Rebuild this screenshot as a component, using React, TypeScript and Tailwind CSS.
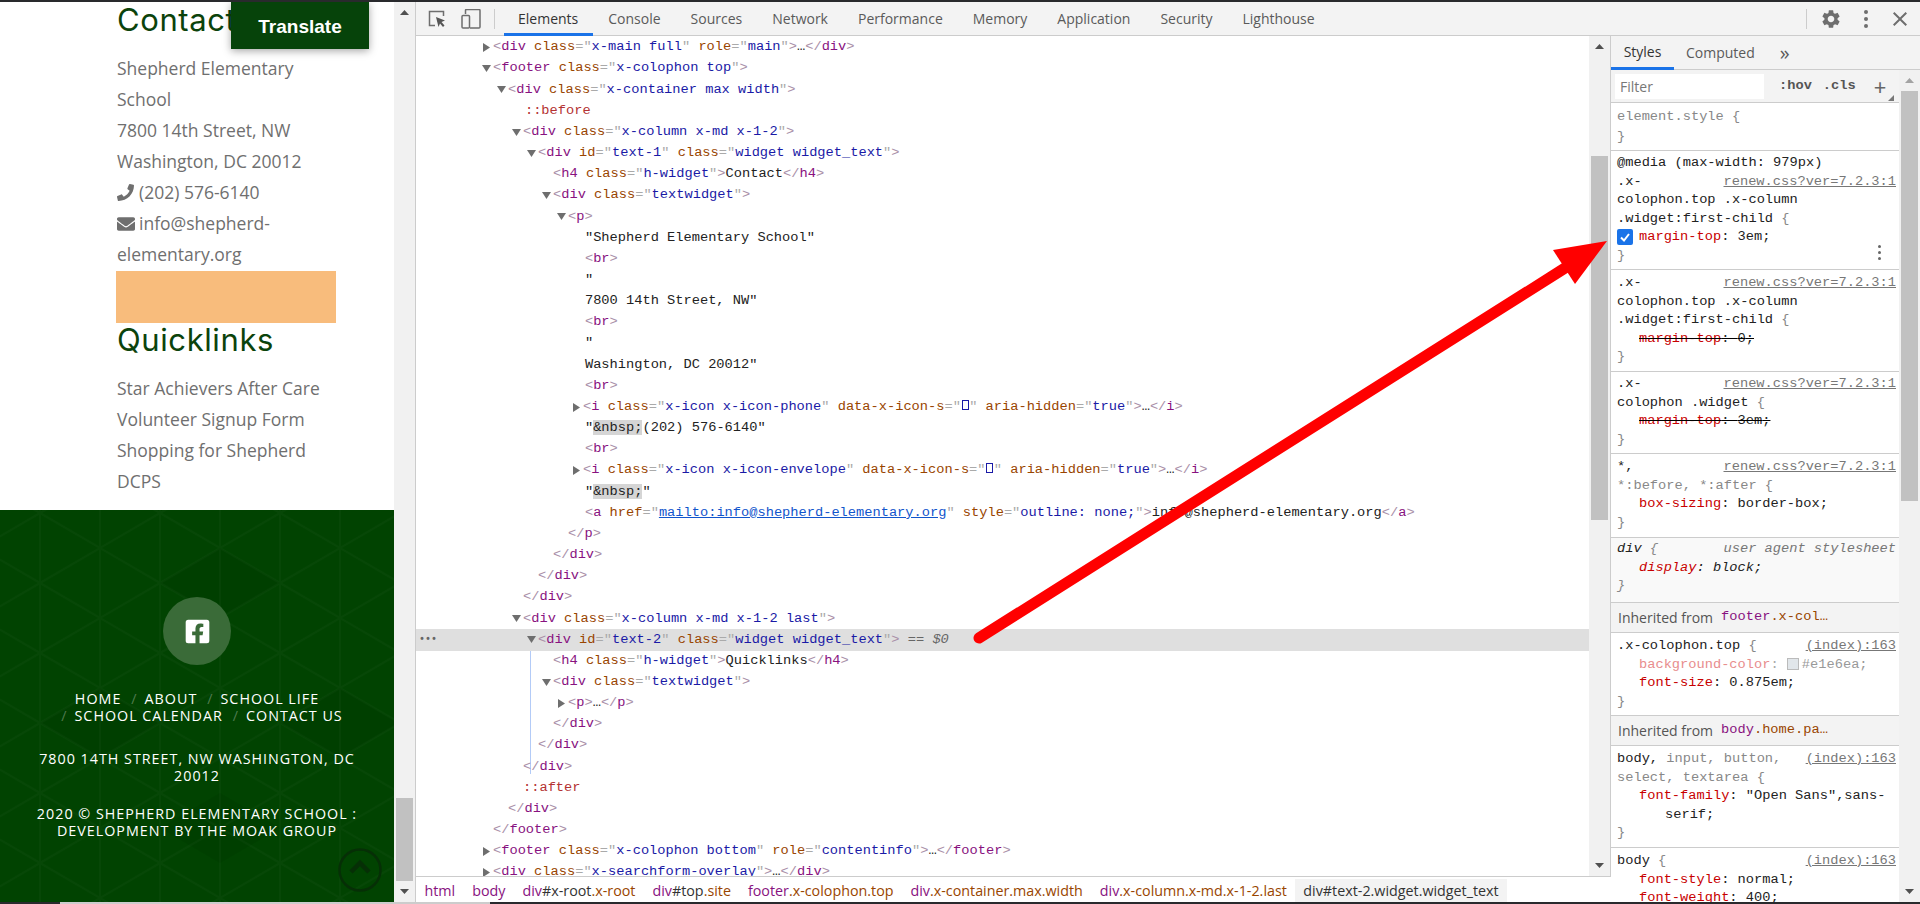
import { Fragment, type ReactNode } from 'react';
import { FaFacebookSquare, FaPhone, FaEnvelope } from 'react-icons/fa';
import { MdSettings, MdClose } from 'react-icons/md';

const ui = "font-['Open_Sans',sans-serif]";
const mono = "font-['Liberation_Mono',monospace]";

function Bracket({ children }: { children: ReactNode }) {
  return <span className="text-[#a98fa8]">{children}</span>;
}

function Attrs({ list }: { list: [string, ReactNode][] }) {
  return (
    <>
      {list.map(([k, v]) => (
        <Fragment key={k}>
          {' '}
          <span className="text-[#994500]">{k}</span>
          <span className="text-[#aaaaaa]">="</span>
          <span className="text-[#1a1aa6]">{v}</span>
          <span className="text-[#aaaaaa]">"</span>
        </Fragment>
      ))}
    </>
  );
}

function Open({ t, a = [] }: { t: string; a?: [string, ReactNode][] }) {
  return (
    <>
      <Bracket>&lt;</Bracket>
      <span className="text-[#881280]">{t}</span>
      <Attrs list={a} />
      <Bracket>&gt;</Bracket>
    </>
  );
}

function Close({ t }: { t: string }) {
  return (
    <>
      <Bracket>&lt;/</Bracket>
      <span className="text-[#881280]">{t}</span>
      <Bracket>&gt;</Bracket>
    </>
  );
}

function Tofu() {
  return (
    <span className="inline-flex w-[8.22px] justify-center">
      <span className="inline-block h-[10px] w-[7px] border border-[#1a1aa6]" />
    </span>
  );
}

function Nbsp() {
  return <span className="bg-[#d5d5d5]">&amp;nbsp;</span>;
}

type Row = { lv: number; arrow?: 'down' | 'right'; body: ReactNode; selected?: boolean };

const rows: Row[] = [
  { lv: 0, arrow: 'right', body: <><Open t="div" a={[['class', 'x-main full'], ['role', 'main']]} />…<Close t="div" /></> },
  { lv: 0, arrow: 'down', body: <Open t="footer" a={[['class', 'x-colophon top']]} /> },
  { lv: 1, arrow: 'down', body: <Open t="div" a={[['class', 'x-container max width']]} /> },
  { lv: 2.13, body: <span className="text-[#b43232]">::before</span> },
  { lv: 2, arrow: 'down', body: <Open t="div" a={[['class', 'x-column x-md x-1-2']]} /> },
  { lv: 3, arrow: 'down', body: <Open t="div" a={[['id', 'text-1'], ['class', 'widget widget_text']]} /> },
  { lv: 4, body: <><Open t="h4" a={[['class', 'h-widget']]} />Contact<Close t="h4" /></> },
  { lv: 4, arrow: 'down', body: <Open t="div" a={[['class', 'textwidget']]} /> },
  { lv: 5, arrow: 'down', body: <Open t="p" /> },
  { lv: 6.13, body: '"Shepherd Elementary School"' },
  { lv: 6.13, body: <Open t="br" /> },
  { lv: 6.13, body: '"' },
  { lv: 6.13, body: '7800 14th Street, NW"' },
  { lv: 6.13, body: <Open t="br" /> },
  { lv: 6.13, body: '"' },
  { lv: 6.13, body: 'Washington, DC 20012"' },
  { lv: 6.13, body: <Open t="br" /> },
  { lv: 6, arrow: 'right', body: <><Open t="i" a={[['class', 'x-icon x-icon-phone'], ['data-x-icon-s', <Tofu />], ['aria-hidden', 'true']]} />…<Close t="i" /></> },
  { lv: 6.13, body: <>"<Nbsp />(202) 576-6140"</> },
  { lv: 6.13, body: <Open t="br" /> },
  { lv: 6, arrow: 'right', body: <><Open t="i" a={[['class', 'x-icon x-icon-envelope'], ['data-x-icon-s', <Tofu />], ['aria-hidden', 'true']]} />…<Close t="i" /></> },
  { lv: 6.13, body: <>"<Nbsp />"</> },
  { lv: 6.13, body: <><Open t="a" a={[['href', <span className="text-[#1155cc] underline">mailto:info@shepherd-elementary.org</span>], ['style', 'outline: none;']]} />info@shepherd-elementary.org<Close t="a" /></> },
  { lv: 5, body: <Close t="p" /> },
  { lv: 4, body: <Close t="div" /> },
  { lv: 3, body: <Close t="div" /> },
  { lv: 2, body: <Close t="div" /> },
  { lv: 2, arrow: 'down', body: <Open t="div" a={[['class', 'x-column x-md x-1-2 last']]} /> },
  {
    lv: 3,
    arrow: 'down',
    selected: true,
    body: <><Open t="div" a={[['id', 'text-2'], ['class', 'widget widget_text']]} /><span className="text-[#666666]"> == <i>$0</i></span></>,
  },
  { lv: 4, body: <><Open t="h4" a={[['class', 'h-widget']]} />Quicklinks<Close t="h4" /></> },
  { lv: 4, arrow: 'down', body: <Open t="div" a={[['class', 'textwidget']]} /> },
  { lv: 5, arrow: 'right', body: <><Open t="p" />…<Close t="p" /></> },
  { lv: 4, body: <Close t="div" /> },
  { lv: 3, body: <Close t="div" /> },
  { lv: 2, body: <Close t="div" /> },
  { lv: 2, body: <span className="text-[#b43232]">::after</span> },
  { lv: 1, body: <Close t="div" /> },
  { lv: 0, body: <Close t="footer" /> },
  { lv: 0, arrow: 'right', body: <><Open t="footer" a={[['class', 'x-colophon bottom'], ['role', 'contentinfo']]} />…<Close t="footer" /></> },
  { lv: 0, arrow: 'right', body: <><Open t="div" a={[['class', 'x-searchform-overlay']]} />…<Close t="div" /></> },
];

function Caret({ dir }: { dir: 'down' | 'right' }) {
  return (
    <svg width="9" height="9" viewBox="0 0 9 9" className="fill-[#6e6e6e]">
      {dir === 'down' ? <polygon points="0,1 9,1 4.5,8" /> : <polygon points="1,0 8,4.5 1,9" />}
    </svg>
  );
}

function ScrollArrow({ up }: { up?: boolean }) {
  return (
    <svg width="9" height="5" viewBox="0 0 9 5" className={up ? 'fill-[#a3a3a3]' : 'fill-[#505050]'}>
      {up ? <polygon points="0,5 9,5 4.5,0" /> : <polygon points="0,0 9,0 4.5,5" />}
    </svg>
  );
}

function Tree() {
  return (
    <div className={`relative min-w-0 flex-1 overflow-hidden bg-white pt-[1px] ${mono} text-[13.7px] text-[#222222]`}>
      <div className="absolute top-[613px] left-[114px] h-[125px] w-px bg-[#b3cbf7]" />
      {rows.map((r, i) => (
        <div
          key={i}
          className={`relative flex h-[21.16px] items-center whitespace-pre ${r.selected ? 'bg-[#dfdfdf]' : ''}`}
          style={{ paddingLeft: 66 + r.lv * 15 }}
        >
          {r.selected && <span className="absolute top-[6px] left-[3px] text-[10px] leading-none font-bold text-[#666666]">•••</span>}
          <span className="flex w-[11px] shrink-0 items-center">{r.arrow && <Caret dir={r.arrow} />}</span>
          <span>{r.body}</span>
        </div>
      ))}
    </div>
  );
}

function Scrollbar({ top, height, upDark }: { top: string; height: string; upDark?: boolean }) {
  return (
    <div className="flex h-full w-[21px] shrink-0 flex-col bg-[#f1f1f1]">
      <div className="flex h-[21px] shrink-0 items-center justify-center">
        {upDark ? <svg width="9" height="5" viewBox="0 0 9 5" className="fill-[#505050]"><polygon points="0,5 9,5 4.5,0" /></svg> : <ScrollArrow up />}
      </div>
      <div className="min-h-0 flex-1 px-[2px]">
        <div className={`${top} ${height} bg-[#c1c1c1]`} />
      </div>
      <div className="flex h-[21px] shrink-0 items-center justify-center">
        <ScrollArrow />
      </div>
    </div>
  );
}

function Line({ children, link, sub }: { children?: ReactNode; link?: string; sub?: boolean }) {
  return (
    <div className={`flex h-[18.6px] shrink-0 items-center justify-between whitespace-pre ${sub ? 'pl-[22px]' : ''}`}>
      <span>{children}</span>
      {link && <span className="text-[#777777] underline">{link}</span>}
    </div>
  );
}

const Prop = ({ children }: { children: ReactNode }) => <span className="text-[#c80000]">{children}</span>;
const Dim = ({ children }: { children: ReactNode }) => <span className="text-[#888888]">{children}</span>;

function Struck({ value }: { value: string }) {
  return (
    <Line sub>
      <span className="line-through decoration-black">
        <Prop>margin-top</Prop>: {value};
      </span>
    </Line>
  );
}

function Inherited({ name, rest }: { name: string; rest: string }) {
  return (
    <div className={`flex h-[30px] shrink-0 items-center border-b border-[#cccccc] bg-[#f3f3f3] pl-[7px] text-[#555555] ${ui} text-[14px]`}>
      Inherited from
      <span className={`ml-[8px] ${mono} text-[13.7px]`}>
        <span className="text-[#881280]">{name}</span>
        <span className="text-[#994500]">{rest}</span>
      </span>
    </div>
  );
}

function Block({ className, children }: { className: string; children: ReactNode }) {
  return <div className={`flex shrink-0 flex-col border-b border-[#cccccc] pr-[3px] pl-[6px] ${className}`}>{children}</div>;
}

function StylesList() {
  const link = 'renew.css?ver=7.2.3:1';
  return (
    <div className={`min-h-0 flex-1 overflow-hidden bg-white ${mono} text-[13.7px] text-[#222222]`}>
      <Block className="h-[48px] pt-[5px]">
        <Line><Dim>element.style {'{'}</Dim></Line>
        <div className="h-[1px]" />
        <Line><Dim>{'}'}</Dim></Line>
      </Block>
      <Block className="relative h-[119px] pt-[3px]">
        <Line>@media (max-width: 979px)</Line>
        <Line link={link}>.x-</Line>
        <Line>colophon.top .x-column</Line>
        <Line>.widget:first-child <Dim>{'{'}</Dim></Line>
        <Line sub><Prop>margin-top</Prop>: 3em;</Line>
        <Line><Dim>{'}'}</Dim></Line>
        <span className="absolute top-[78px] left-[6px] flex h-[16px] w-[16px] items-center justify-center rounded-[2px] bg-[#1a73e8]">
          <svg width="12" height="12" viewBox="0 0 12 12" fill="none" stroke="white" strokeWidth="2">
            <path d="M2 6.5 L5 9.5 L10 3" />
          </svg>
        </span>
        <span className="absolute top-[94px] left-[267px] flex flex-col gap-[3px]">
          <i className="block h-[3px] w-[3px] rounded-full bg-[#666666]" />
          <i className="block h-[3px] w-[3px] rounded-full bg-[#666666]" />
          <i className="block h-[3px] w-[3px] rounded-full bg-[#666666]" />
        </span>
      </Block>
      <Block className="h-[102px] pt-[4px]">
        <Line link={link}>.x-</Line>
        <Line>colophon.top .x-column</Line>
        <Line>.widget:first-child <Dim>{'{'}</Dim></Line>
        <Struck value="0" />
        <Line><Dim>{'}'}</Dim></Line>
      </Block>
      <Block className="h-[82px] pt-[3px]">
        <Line link={link}>.x-</Line>
        <Line>colophon .widget <Dim>{'{'}</Dim></Line>
        <Struck value="3em" />
        <Line><Dim>{'}'}</Dim></Line>
      </Block>
      <Block className="h-[84px] pt-[4px]">
        <Line link={link}>*,</Line>
        <Line><Dim>*:before, *:after {'{'}</Dim></Line>
        <Line sub><Prop>box-sizing</Prop>: border-box;</Line>
        <Line><Dim>{'}'}</Dim></Line>
      </Block>
      <Block className="h-[65px] bg-[#f9f9f9] pt-[2px] italic">
        <div className="flex h-[18.6px] items-center justify-between whitespace-pre">
          <span>div <Dim>{'{'}</Dim></span>
          <span className="text-[#777777]">user agent stylesheet</span>
        </div>
        <Line sub><Prop>display</Prop>: block;</Line>
        <Line><Dim>{'}'}</Dim></Line>
      </Block>
      <Inherited name="footer" rest=".x-col…" />
      <Block className="h-[83px] pt-[4px]">
        <Line link="(index):163">.x-colophon.top <Dim>{'{'}</Dim></Line>
        <Line sub>
          <span className="text-[#e88d8d]">background-color</span>
          <span className="text-[#aaaaaa]">: </span>
          <span className="mr-[3px] inline-block h-[12px] w-[12px] translate-y-[2px] border border-[#bbbbbb] bg-[#e1e6ea]" />
          <span className="text-[#999999]">#e1e6ea;</span>
        </Line>
        <Line sub><Prop>font-size</Prop>: 0.875em;</Line>
        <Line><Dim>{'}'}</Dim></Line>
      </Block>
      <Inherited name="body" rest=".home.pa…" />
      <Block className="h-[102px] pt-[4px]">
        <Line link="(index):163">body, <Dim>input, button,</Dim></Line>
        <Line><Dim>select, textarea {'{'}</Dim></Line>
        <Line sub><Prop>font-family</Prop>: "Open Sans",sans-</Line>
        <div className="flex h-[18.6px] items-center pl-[48px]">serif;</div>
        <Line><Dim>{'}'}</Dim></Line>
      </Block>
      <Block className="pt-[4px]">
        <Line link="(index):163">body <Dim>{'{'}</Dim></Line>
        <Line sub><Prop>font-style</Prop>: normal;</Line>
        <Line sub><Prop>font-weight</Prop>: 400;</Line>
      </Block>
    </div>
  );
}

function StylesPane() {
  return (
    <div className="flex w-[309px] shrink-0 flex-col">
      <div className={`flex h-[34px] shrink-0 border-b border-[#cccccc] bg-[#f3f3f3] ${ui} text-[14px] text-[#5a5a5a]`}>
        <div className="flex h-[34px] w-[63px] items-center justify-center border-b-[3px] border-[#1a73e8] text-[#333333]">Styles</div>
        <div className="flex items-center pl-[12px]">Computed</div>
        <div className="flex items-center pl-[25px] text-[20px] leading-none">»</div>
      </div>
      <div className="flex min-h-0 flex-1">
        <div className="flex min-w-0 flex-1 flex-col">
          <div className="flex h-[33px] shrink-0 items-center border-b border-[#cccccc] bg-[#f3f3f3] pl-[4px]">
            <div className={`flex h-[25px] w-[149px] items-center bg-white pl-[5px] ${ui} text-[14px] text-[#777777]`}>Filter</div>
            <span className={`ml-[15px] ${mono} text-[13.7px] font-bold text-[#555555]`}>:hov</span>
            <span className={`ml-[11px] ${mono} text-[13.7px] font-bold text-[#555555]`}>.cls</span>
            <span className="relative ml-[18px] text-[22px] leading-none text-[#666666]">
              +
              <svg width="6" height="6" viewBox="0 0 6 6" className="absolute top-[20px] left-[14px] fill-[#777777]"><polygon points="6,0 6,6 0,6" /></svg>
            </span>
          </div>
          <StylesList />
        </div>
        <Scrollbar top="mt-0" height="h-[410px]" />
      </div>
    </div>
  );
}

function DevTools() {
  const tabs = ['Console', 'Sources', 'Network', 'Performance', 'Memory', 'Application', 'Security', 'Lighthouse'];
  const crumbs = [
    ['html', ''],
    ['body', ''],
    ['div', '#x-root', '.x-root'],
    ['div', '#top', '.site'],
    ['footer', '', '.x-colophon.top'],
    ['div', '', '.x-container.max.width'],
    ['div', '', '.x-column.x-md.x-1-2.last'],
  ];
  return (
    <div className="flex min-w-0 flex-1 flex-col border-l border-[#cccccc]">
      <div className={`flex h-[34px] shrink-0 items-center border-b border-[#cccccc] bg-[#f3f3f3] ${ui} text-[14px] text-[#5a5a5a]`}>
        <svg width="18" height="18" viewBox="0 0 18 18" className="ml-[12px]" fill="none" stroke="#6e6e6e" strokeWidth="1.5">
          <path d="M7 15.5H1.5V1.5H15.5V6" />
          <path d="M8 7 L17 10.5 L13.5 12 L16.5 15.5 L15 17 L12 13.5 L10.5 17 Z" fill="#555555" stroke="none" />
        </svg>
        <svg width="20" height="20" viewBox="0 0 20 20" className="ml-[15px]" fill="none" stroke="#6e6e6e" strokeWidth="1.5">
          <path d="M4.5 5V1.5a1 1 0 0 1 1-1H18a1 1 0 0 1 1 1V18a1 1 0 0 1-1 1H9" />
          <rect x="1" y="6.5" width="7.5" height="12.5" rx="1" />
        </svg>
        <div className="mr-[9px] ml-[13px] h-[20px] w-px bg-[#cccccc]" />
        <div className="flex h-[34px] items-center border-b-[3px] border-[#1a73e8] pt-[2px] pr-[15px] pl-[14px] text-[#333333]">Elements</div>
        {tabs.map((t) => (
          <div key={t} className="px-[15px]">{t}</div>
        ))}
        <div className="ml-auto h-[20px] w-px bg-[#cccccc]" />
        <MdSettings className="ml-[13px] text-[#6e6e6e]" size={22} />
        <span className="ml-[22px] flex flex-col gap-[3px]">
          <i className="block h-[4px] w-[4px] rounded-full bg-[#6e6e6e]" />
          <i className="block h-[4px] w-[4px] rounded-full bg-[#6e6e6e]" />
          <i className="block h-[4px] w-[4px] rounded-full bg-[#6e6e6e]" />
        </span>
        <MdClose className="mr-[8px] ml-[20px] text-[#6e6e6e]" size={24} />
      </div>
      <div className="flex min-h-0 flex-1">
        <div className="flex min-w-0 flex-1 flex-col">
          <div className="flex min-h-0 flex-1">
            <Tree />
            <Scrollbar top="mt-[99px]" height="h-[364px]" upDark />
            <div className="w-px shrink-0 bg-[#cccccc]" />
          </div>
          <div className={`flex h-[26px] shrink-0 items-stretch border-t border-[#cccccc] bg-white ${ui} text-[14.3px] whitespace-pre`}>
            {crumbs.map(([a, b, c], i) => (
              <span key={i} className="flex items-center px-[8.5px] pt-[3px]">
                <span className="text-[#881280]">{a}</span>
                <span className="text-[#333333]">{b}</span>
                <span className="text-[#994500]">{c}</span>
              </span>
            ))}
            <span className="mt-[2px] flex items-center bg-[#f3f3f3] px-[8px] pt-[1px] text-[#333333]">div#text-2.widget.widget_text</span>
          </div>
        </div>
        <StylesPane />
      </div>
    </div>
  );
}

function FooterPattern() {
  return (
    <svg className="absolute inset-0 h-full w-full" aria-hidden="true">
      <defs>
        <pattern id="tri" x="40" y="3" width="120" height="70" patternUnits="userSpaceOnUse">
          <path d="M0 0V70M60 0V70M120 0V70M0 0L60 35L0 70M60 35L120 0M60 35L120 70M-60 35L0 0" fill="none" stroke="#ffffff" strokeOpacity="0.022" strokeWidth="2" />
        </pattern>
      </defs>
      <rect width="100%" height="100%" fill="url(#tri)" />
      <g fill="#000000" fillOpacity="0.05">
        <polygon points="160,73 220,38 280,73 220,108" />
        <polygon points="40,213 100,178 160,213 100,248" />
        <polygon points="280,213 340,178 394,210 394,216 340,248" />
        <polygon points="220,283 280,318 220,353 160,318" />
      </g>
    </svg>
  );
}

function Sidebar() {
  const body = `${ui} text-[17.5px] leading-[31px] text-[#6f6f6f]`;
  const heading = "font-['Inter',sans-serif] text-[31px] leading-none tracking-[0.6px] text-[#0b430b]";
  const slash = <span className="pr-[7px] pl-[10px] text-[#ffffff50]">/</span>;
  return (
    <div className="relative flex w-[394px] shrink-0 flex-col overflow-hidden">
      <div className="h-[508px] shrink-0 bg-white pl-[117px]">
        <h4 className={`h-[51px] pt-[2px] ${heading}`}>Contact</h4>
        <div className={`w-[220px] ${body}`}>
          <p>Shepherd Elementary</p>
          <p>School</p>
          <p>7800 14th Street, NW</p>
          <p>Washington, DC 20012</p>
          <p className="flex items-center gap-[5px]"><FaPhone size={17} />(202) 576-6140</p>
          <p className="flex items-center gap-[4px]"><FaEnvelope size={18} />info@shepherd-</p>
          <p>elementary.org</p>
        </div>
        <div className="mt-[1px] -ml-[1px] h-[52px] w-[220px] bg-[#f8bc7c]" />
        <h4 className={`h-[50px] pt-[1px] ${heading}`}>Quicklinks</h4>
        <div className={body}>
          <p>Star Achievers After Care</p>
          <p>Volunteer Signup Form</p>
          <p>Shopping for Shepherd</p>
          <p>DCPS</p>
        </div>
      </div>
      <div className={`relative flex min-h-0 flex-1 flex-col items-center bg-[#014301] pt-[87px] text-center ${ui} text-[14.3px] leading-[17px] tracking-[1px] text-white`}>
        <FooterPattern />
        <div className="relative flex h-[68px] w-[68px] items-center justify-center rounded-full bg-[#3a6b38]">
          <FaFacebookSquare size={27} className="text-white" />
        </div>
        <div className="relative mt-[25px]">
          <div>HOME{slash}ABOUT{slash}SCHOOL LIFE</div>
          <div>{slash}SCHOOL CALENDAR{slash}CONTACT US</div>
        </div>
        <div className="relative mt-[26px]">7800 14TH STREET, NW WASHINGTON, DC<br />20012</div>
        <div className="relative mt-[21px]">2020 © SHEPHERD ELEMENTARY SCHOOL :<br />DEVELOPMENT BY THE MOAK GROUP</div>
        <svg width="46" height="46" viewBox="0 0 46 46" fill="none" stroke="#062f06" className="absolute top-[337px] left-[337px]">
          <circle cx="23" cy="23" r="20.5" strokeWidth="2.5" />
          <path d="M14 25 L23 16 L32 25" strokeWidth="4.5" />
        </svg>
      </div>
      <div className="absolute top-0 left-[231px] flex h-[47px] w-[138px] items-center justify-center bg-[#06430a] pt-[4px] font-['Liberation_Sans',sans-serif] text-[19px] font-bold text-white shadow-[0_2px_8px_rgba(0,0,0,0.35)]">
        Translate
      </div>
    </div>
  );
}

export default function App() {
  return (
    <div className="relative flex h-[904px] w-[1920px] flex-col overflow-hidden bg-white">
      <div className="h-[2px] shrink-0 bg-[#292a2d]" />
      <div className="flex min-h-0 flex-1">
        <Sidebar />
        <Scrollbar top="mt-[775px]" height="h-[83px]" upDark />
        <DevTools />
      </div>
      <div className="flex h-[2px] shrink-0">
        <div className="w-[60px] bg-[#292a2d]" />
        <div className="w-[430px] bg-[#cccccc]" />
        <div className="flex-1 bg-[#292a2d]" />
      </div>
      <svg className="pointer-events-none absolute inset-0" width="1920" height="904" aria-hidden="true">
        <line x1="979" y1="638" x2="1565" y2="268" stroke="#ff0000" strokeWidth="11" strokeLinecap="round" />
        <polygon points="1607,241 1553,250 1575,284" fill="#ff0000" />
      </svg>
    </div>
  );
}
